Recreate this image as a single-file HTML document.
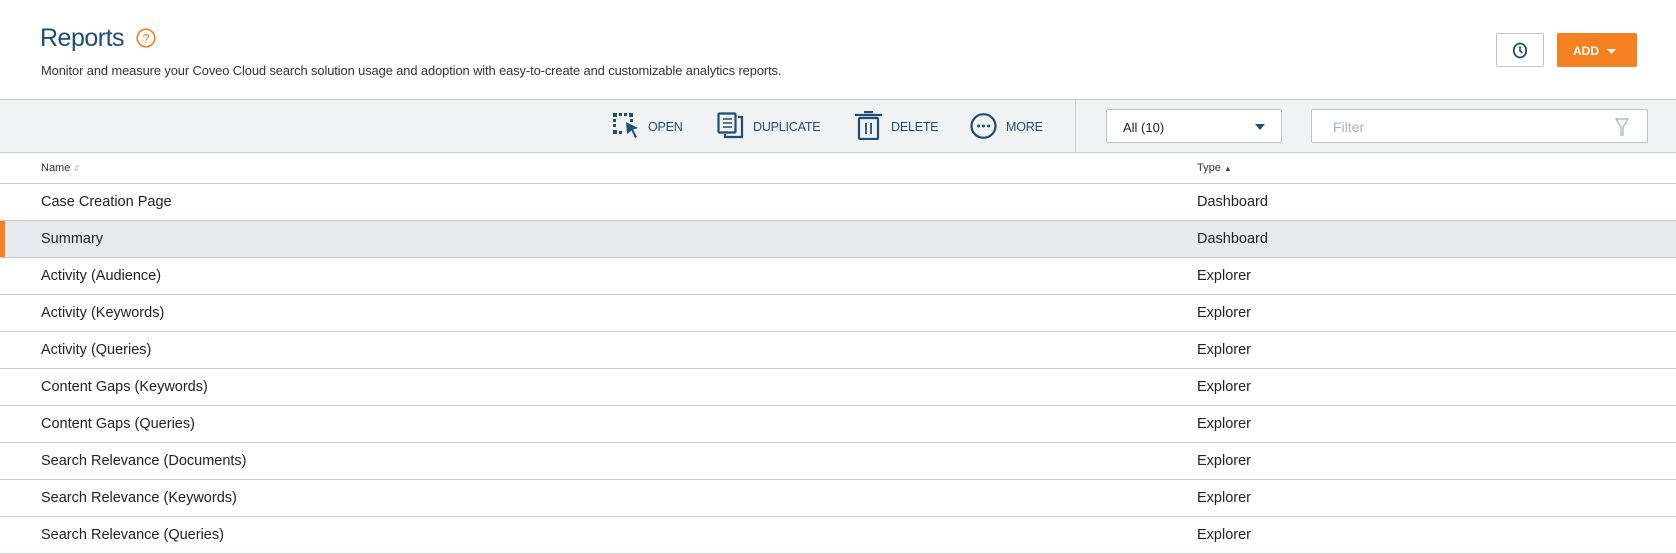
<!DOCTYPE html>
<html><head><style>
*{margin:0;padding:0;box-sizing:border-box}
body{width:1676px;height:552px;overflow:hidden;background:#fff;font-family:"Liberation Sans",sans-serif;color:#282829;position:relative}
.abs{position:absolute}
h1{position:absolute;left:40px;top:24px;font-size:25px;font-weight:normal;color:#1d4f76;letter-spacing:-0.5px}
.sub{left:41px;top:63px;font-size:12.9px;color:#333;letter-spacing:-0.1px}
.tb{left:0;top:99px;width:1676px;height:54px;background:#f1f2f4;border-top:1px solid #c5cbd1;border-bottom:1px solid #c5cbd1}
.act{position:absolute;top:20px;font-size:12.5px;color:#1d4f76;letter-spacing:-0.2px}
.btn{border:1px solid #bcc3ca;background:#fff;border-radius:2px}
.row{position:absolute;left:0;width:1676px;height:37px;border-bottom:1px solid #c5cbd1;font-size:14.5px;color:#222}
.row span{position:absolute;top:10px}
</style></head><body>
<h1>Reports</h1>
<svg class="abs" style="left:136px;top:28px" width="20" height="20" viewBox="0 0 20 20"><circle cx="10" cy="10" r="8.8" fill="none" stroke="#f58020" stroke-width="1.6"/><text x="10" y="15" text-anchor="middle" font-size="13" font-family="Liberation Sans" fill="#f58020">?</text></svg>
<div class="abs sub">Monitor and measure your Coveo Cloud search solution usage and adoption with easy-to-create and customizable analytics reports.</div>
<div class="abs btn" style="left:1496px;top:33px;width:48px;height:34px"><svg class="abs" style="left:15px;top:8px" width="16" height="17" viewBox="0 0 16 17"><ellipse cx="8" cy="8.5" rx="6.2" ry="7" fill="none" stroke="#1d4f76" stroke-width="1.8"/><path d="M8 4.5V9l2.5 2" fill="none" stroke="#1d4f76" stroke-width="1.6"/></svg></div>
<div class="abs" style="left:1557px;top:33px;width:80px;height:34px;background:#f58020;border-radius:2px;color:#fff;font-size:12px;font-weight:bold;padding:11px 0 0 16px">ADD <svg style="margin-left:5px" width="9" height="6" viewBox="0 0 9 6"><path d="M0 0h9L4.5 5z" fill="#fff"/></svg></div>
<div class="abs tb">
<svg class="abs" style="left:613px;top:13px" width="27" height="26" viewBox="0 0 27 26"><g fill="#1d4f76"><rect x="0" y="0" width="4" height="4"/><rect x="6" y="0" width="3" height="3"/><rect x="11" y="0" width="3" height="3"/><rect x="16" y="0" width="4" height="4"/><rect x="0" y="6" width="3" height="3"/><rect x="0" y="11" width="3" height="3"/><rect x="17" y="6" width="3" height="3"/><rect x="0" y="17" width="4" height="4"/><rect x="6" y="18" width="3" height="3"/><path d="M13 9l12 6-5 1.5L24 24l-2 1-3.5-7.5L14 21z"/></g></svg>
<div class="act" style="left:648px">OPEN</div>
<svg class="abs" style="left:717px;top:12px" width="27" height="27" viewBox="0 0 27 27"><g fill="none" stroke="#1d4f76" stroke-width="2.2"><rect x="1.5" y="1.5" width="17" height="19" rx="1"/><path d="M21 5h4v20H8v-3"/><path d="M6 7h9M6 11h9M6 15h9" stroke-width="1.6"/></g></svg>
<div class="act" style="left:753px">DUPLICATE</div>
<svg class="abs" style="left:855px;top:11px" width="27" height="29" viewBox="0 0 27 29"><g fill="none" stroke="#1d4f76" stroke-width="2.2"><path d="M0 4h27M9 1h9"/><rect x="4" y="7" width="19" height="21" rx="1"/><path d="M11 12v11M16 12v11" stroke-width="1.8"/></g></svg>
<div class="act" style="left:891px">DELETE</div>
<svg class="abs" style="left:970px;top:13px" width="27" height="26" viewBox="0 0 27 26"><ellipse cx="13.5" cy="13" rx="12" ry="11.8" fill="none" stroke="#1d4f76" stroke-width="2.2"/><g fill="#1d4f76"><circle cx="8.5" cy="13" r="1.5"/><circle cx="13.5" cy="13" r="1.5"/><circle cx="18.5" cy="13" r="1.5"/></g></svg>
<div class="act" style="left:1006px">MORE</div>
<div class="abs" style="left:1075px;top:0;width:1px;height:52px;background:#c5cbd1"></div>
<div class="abs btn" style="left:1106px;top:9px;width:176px;height:34px;font-size:13px;color:#222;padding:10px 0 0 16px">All (10)<svg class="abs" style="left:148px;top:14px" width="10" height="6" viewBox="0 0 10 6"><path d="M0 0h10L5 6z" fill="#1d4f76"/></svg></div>
<div class="abs btn" style="left:1311px;top:9px;width:337px;height:34px;font-size:14px;color:#a9b1b9;padding:9px 0 0 21px">Filter<svg class="abs" style="left:303px;top:8px" width="14" height="18" viewBox="0 0 14 18"><path d="M1 1h12L8 9v8H6V9z" fill="none" stroke="#a9b1b9" stroke-width="1.2"/></svg></div>
</div>
<div class="row" style="top:153px;height:31px;font-size:11px;color:#333"><span style="left:41px;top:9px">Name <span style="color:#bbb;font-size:8px;position:static">&#8693;</span></span><span style="left:1197px;top:9px">Type <span style="color:#1d4f76;font-size:8px;position:static">&#9650;</span></span></div>
<div class="row" style="top:184px"><span style="left:41px">Case Creation Page</span><span style="left:1197px">Dashboard</span></div>
<div class="row" style="top:221px;background:#e6eaee"><div class="abs" style="left:0;top:0;width:5px;height:36px;background:#f58020"></div><span style="left:41px">Summary</span><span style="left:1197px">Dashboard</span></div>
<div class="row" style="top:258px"><span style="left:41px">Activity (Audience)</span><span style="left:1197px">Explorer</span></div>
<div class="row" style="top:295px"><span style="left:41px">Activity (Keywords)</span><span style="left:1197px">Explorer</span></div>
<div class="row" style="top:332px"><span style="left:41px">Activity (Queries)</span><span style="left:1197px">Explorer</span></div>
<div class="row" style="top:369px"><span style="left:41px">Content Gaps (Keywords)</span><span style="left:1197px">Explorer</span></div>
<div class="row" style="top:406px"><span style="left:41px">Content Gaps (Queries)</span><span style="left:1197px">Explorer</span></div>
<div class="row" style="top:443px"><span style="left:41px">Search Relevance (Documents)</span><span style="left:1197px">Explorer</span></div>
<div class="row" style="top:480px"><span style="left:41px">Search Relevance (Keywords)</span><span style="left:1197px">Explorer</span></div>
<div class="row" style="top:517px"><span style="left:41px">Search Relevance (Queries)</span><span style="left:1197px">Explorer</span></div>
</body></html>
